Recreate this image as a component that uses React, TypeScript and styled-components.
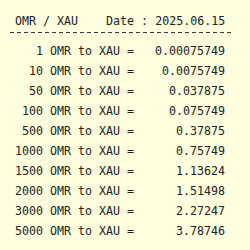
import React from 'react';
import styled, { createGlobalStyle } from 'styled-components';

const GlobalStyle = createGlobalStyle`
  html, body {
    margin: 0;
    padding: 0;
    background: #ffffe0;
  }
`;

const Sheet = styled.main`
  display: flex;
  flex-direction: column;
  width: 250px;
  height: 250px;
  box-sizing: border-box;
  padding: 14px 0 0 8px;
  font-family: "DejaVu Sans Mono", monospace;
  font-size: 11.65px;
  color: #222;
  white-space: pre;
`;

const Header = styled.header`
  display: flex;
  gap: 28px;
  padding-left: 7px;
  line-height: 14px;
`;

// dashed rule, one dash per 7px character cell
const Divider = styled.hr`
  width: 224px;
  height: 1px;
  margin: 4px 0 0 2px;
  border: 0;
  background: repeating-linear-gradient(90deg, #333 0 4px, transparent 4px 7px);
`;

const RateList = styled.ol`
  list-style: none;
  margin: 8px 0 0 0;
  padding: 0;
`;

const RateRow = styled.li`
  display: grid;
  grid-template-columns: 35px auto 91px;
  justify-content: start;
  height: 20px;
  line-height: 20px;
`;

const Amount = styled.span`
  text-align: right;
`;

const Value = styled.span`
  text-align: right;
`;

interface Rate {
  amount: number;
  value: string;
}

const rates: Rate[] = [
  { amount: 1, value: '0.00075749' },
  { amount: 10, value: '0.0075749' },
  { amount: 50, value: '0.037875' },
  { amount: 100, value: '0.075749' },
  { amount: 500, value: '0.37875' },
  { amount: 1000, value: '0.75749' },
  { amount: 1500, value: '1.13624' },
  { amount: 2000, value: '1.51498' },
  { amount: 3000, value: '2.27247' },
  { amount: 5000, value: '3.78746' }
];

export default function App() {
  const rows = rates.map(({ amount, value }) => (
    <RateRow key={amount}>
      <Amount>{amount}</Amount>
      <span> OMR to XAU =</span>
      <Value>{value}</Value>
    </RateRow>
  ));

  return (
    <>
      <GlobalStyle />
      <Sheet>
        <Header>
          <span>OMR / XAU</span>
          <span>Date : 2025.06.15</span>
        </Header>
        <Divider />
        <RateList>{rows}</RateList>
      </Sheet>
    </>
  );
}
